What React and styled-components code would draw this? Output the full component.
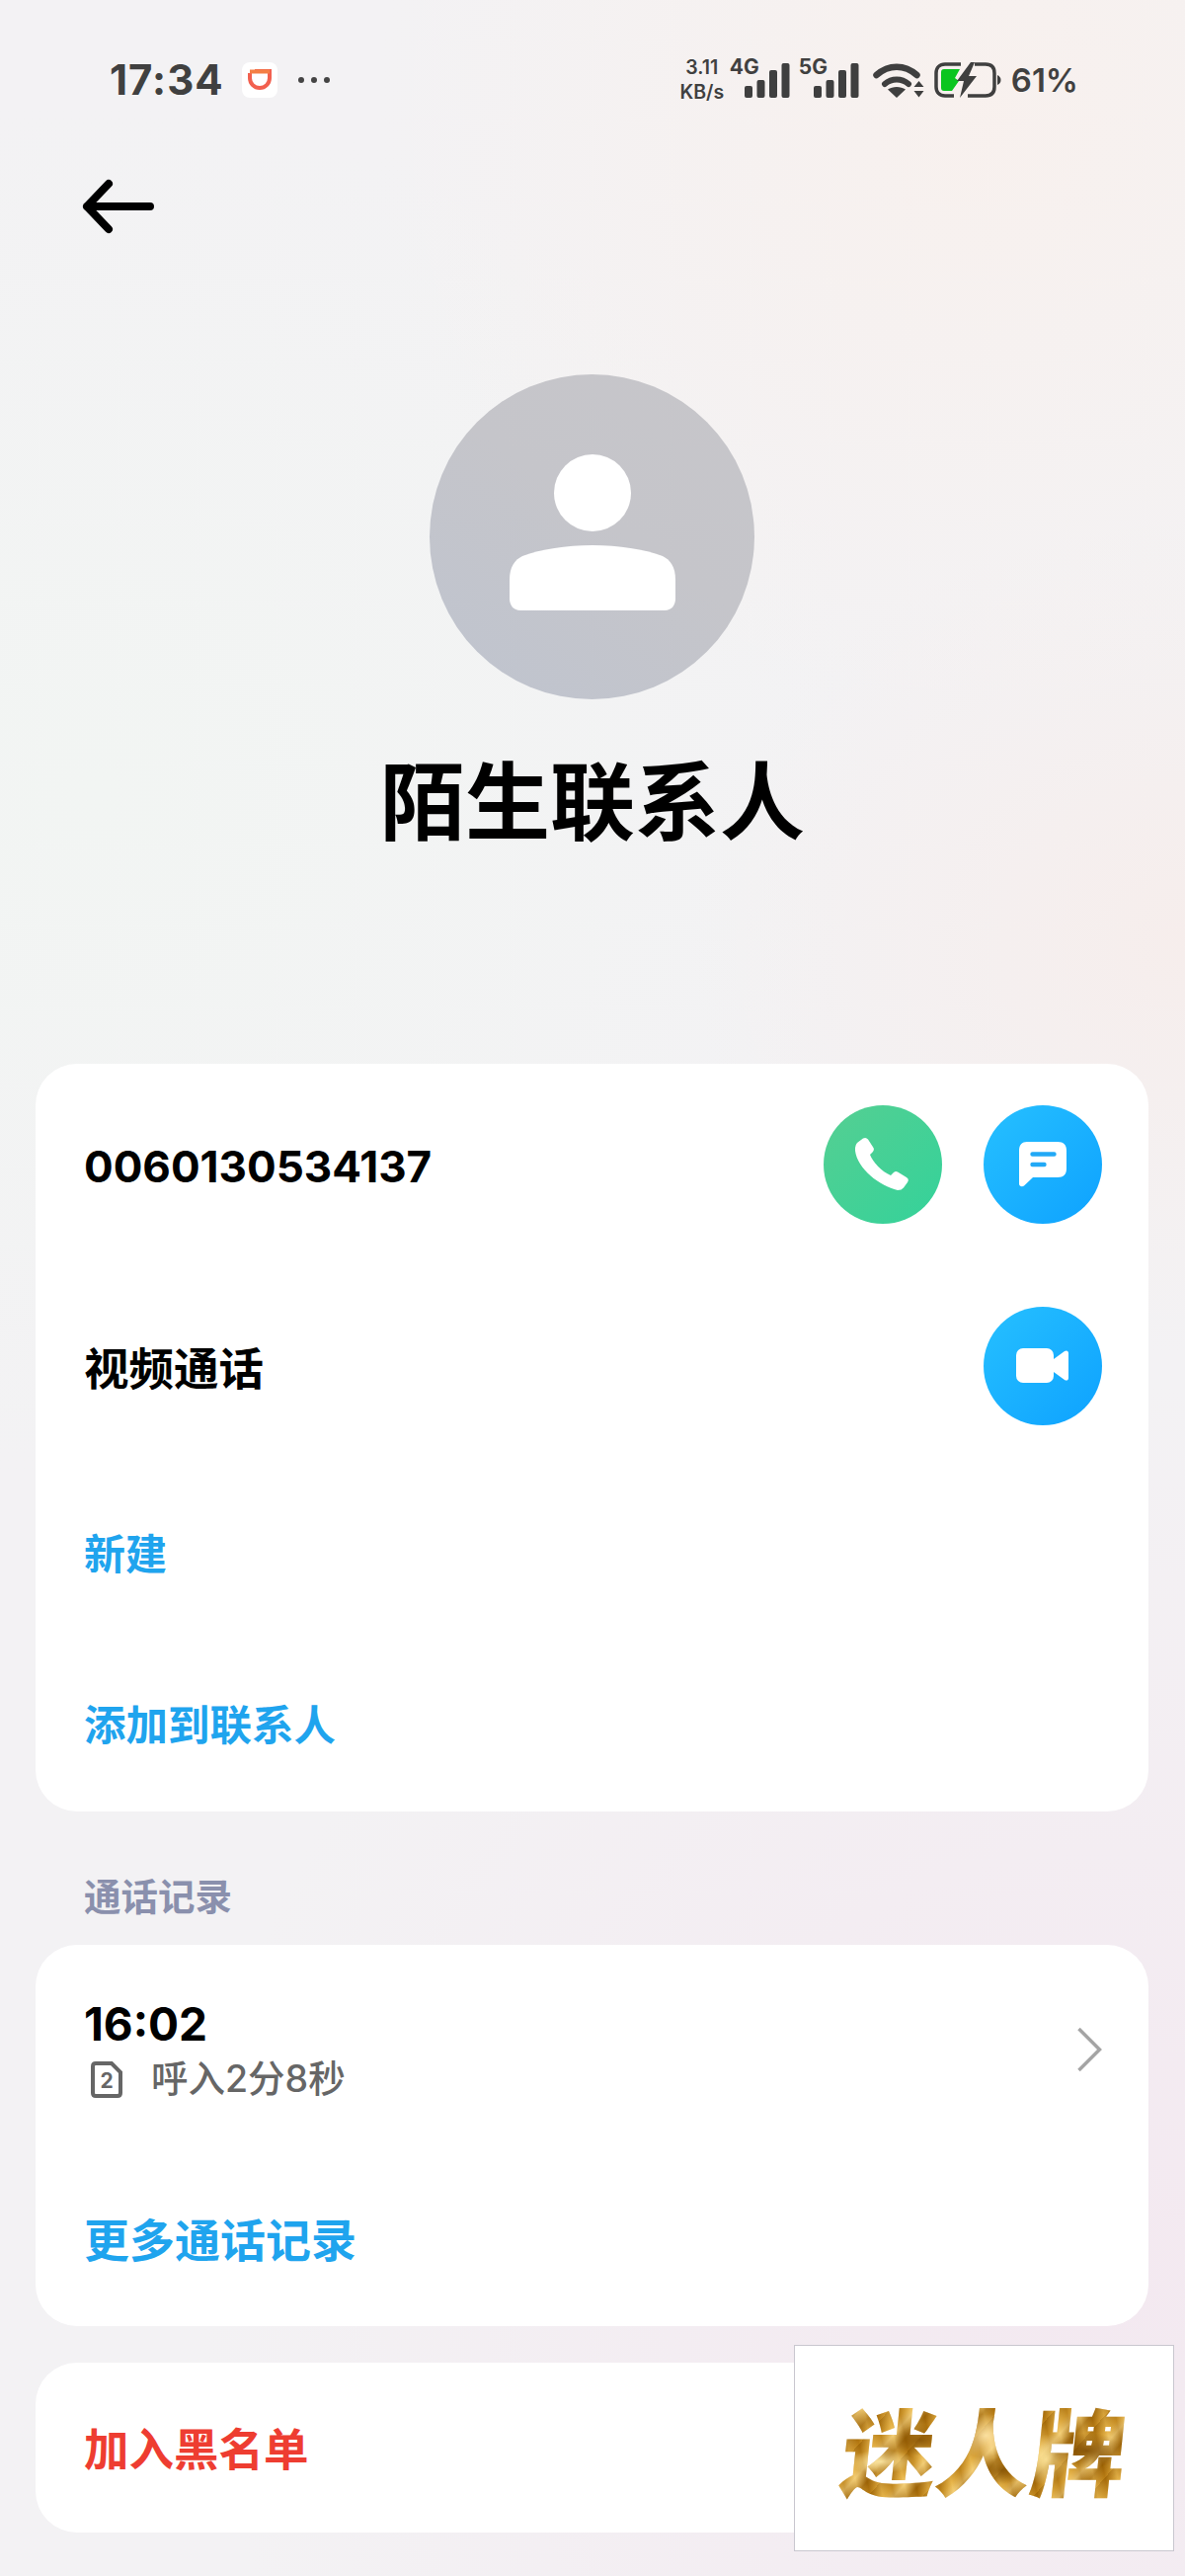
import React from 'react';
import styled, { createGlobalStyle } from 'styled-components';

const CJK = '"Inter", "Noto Sans CJK SC", "Noto Sans", sans-serif';

const GlobalStyle = createGlobalStyle`
  html, body {
    margin: 0;
    padding: 0;
    background: #f3f3f4;
  }
  * {
    box-sizing: border-box;
  }
`;

export default function App() {
  return (
    <Page>
      <GlobalStyle />
      <StatusBar>
        <StatusLeft>
          <Clock>17:34</Clock>
          <AppBadge>
            <svg width="26" height="24" viewBox="0 0 26 24" fill="none">
              <path d="M3 5V10A10 10 0 0 0 23 10V3H8" stroke="#f2604f" strokeWidth="4" />
              <path d="M3 3.500H23" stroke="#f47f45" strokeWidth="4" />
            </svg>
          </AppBadge>
          <Dots>
            <span /><span /><span />
          </Dots>
        </StatusLeft>
        <StatusRight>
          <Speed>
            <span>3.11</span>
            <span>KB/s</span>
          </Speed>
          <Signal>
            <NetLabel>4G</NetLabel>
            <SignalBars />
          </Signal>
          <Signal>
            <NetLabel>5G</NetLabel>
            <SignalBars />
          </Signal>
          <WifiWrap>
            <svg width="54" height="36" viewBox="0 0 54 36" fill="none">
              <path d="M4.500 13C17 2 33 2 45.500 13" stroke="#3f3f3f" strokeWidth="6.500" strokeLinecap="round" />
              <path d="M13 22C20 16 30 16 37 22" stroke="#3f3f3f" strokeWidth="6" strokeLinecap="round" />
              <path d="M16 27.500C21 24 29 24 34 27.500L25 36Z" fill="#3f3f3f" />
              <path d="M47.500 19L52.500 25H42.500Z M47.500 35.500L42.500 29H52.500Z" fill="#3f3f3f" />
            </svg>
          </WifiWrap>
          <svg width="68" height="36" viewBox="0 0 68 36" fill="none">
            <path d="M27 2H11C5.500 2 2 5.500 2 11V25C2 30.500 5.500 34 11 34H20" stroke="#3f3f3f" strokeWidth="3.500" />
            <path d="M41 2H52C58 2 61 5.500 61 11V25C61 30.500 58 34 52 34H34" stroke="#3f3f3f" strokeWidth="3.500" />
            <path d="M64 13C66.500 14 67.500 16 67.500 18C67.500 20 66.500 22 64 23Z" fill="#3f3f3f" />
            <path d="M10 7H26L21 16L25 19L18 29H10C8 29 7 28 7 26V10C7 8 8 7 10 7Z" fill="#0bc51f" />
            <path d="M37 0L23 19H30L26 36L43 14H35L41 0Z" fill="#3f3f3f" />
          </svg>
          <Percent>61%</Percent>
        </StatusRight>
      </StatusBar>

      <BackButton>
        <svg width="76" height="56" viewBox="0 0 76 56" fill="none">
          <path d="M28 5L6 28L28 51M6 28H70" stroke="#000" strokeWidth="8" strokeLinecap="round" strokeLinejoin="round" />
        </svg>
      </BackButton>

      <Profile>
        <Avatar>
          <svg width="170" height="158" viewBox="0 0 170 158" fill="#fff">
            <circle cx="85" cy="39" r="39" />
            <path d="M1 127C1 114 6 107 14 103C33 96 58 92 85 92C112 92 137 96 156 103C164 107 169 114 169 127V146C169 153 165 158 158 158H12C5 158 1 153 1 146Z" />
          </svg>
        </Avatar>
        <Name>陌生联系人</Name>
      </Profile>

      <Card>
        <ActionRow>
          <Number>0060130534137</Number>
          <Buttons>
            <RoundButton $kind="green">
              <svg width="56" height="56" viewBox="0 0 56 56" fill="#fff">
                <path d="M2 6L8 1.500Q11 0 13 2.500L18.500 11Q19.500 13 18 15L15 18C18 26 27 35 36 39L39 36Q41 34.500 43 35.500L52 41Q55 43 53 46L49 51.500Q47 54 43 54C25 50 2 32 0 14Q-0.500 9 2 6Z" />
              </svg>
            </RoundButton>
            <RoundButton $kind="blue">
              <svg width="48" height="46" viewBox="0 0 48 46">
                <path d="M8 0H39C45 0 48 3 48 9V27C48 33 45 36 39 36H14L5 44.500C3 46 0 45 0 42.500V9C0 3 3 0 8 0Z" fill="#fff" />
                <path d="M13.500 12.500H35.500M13.500 23H25.500" stroke="#22a9f6" strokeWidth="4.400" strokeLinecap="round" />
              </svg>
            </RoundButton>
          </Buttons>
        </ActionRow>
        <ActionRow $gap={84}>
          <RowTitle>视频通话</RowTitle>
          <Buttons>
            <RoundButton $kind="blue">
              <svg width="54" height="36" viewBox="0 0 54 36" fill="#fff">
                <rect x="0" y="0" width="38" height="35" rx="7" />
                <path d="M38 11L49 3C51 1.800 53 2.500 53 5V30C53 32.500 51 33.200 49 32L38 24Z" />
              </svg>
            </RoundButton>
          </Buttons>
        </ActionRow>
        <LinkRow $top={77} $height={100} $size={42}>新建</LinkRow>
        <LinkRow $top={73} $height={100} $size={42.500}>添加到联系人</LinkRow>
      </Card>

      <SectionLabel>通话记录</SectionLabel>

      <HistoryCard>
        <RecordRow>
          <RecordInfo>
            <RecordTime>16:02</RecordTime>
            <RecordMeta>
              <svg width="32" height="37" viewBox="0 0 32 37" fill="none">
                <path d="M5 2H21L30 11V32C30 34 29 35 27 35H5C3 35 2 34 2 32V5C2 3 3 2 5 2Z" stroke="#666" strokeWidth="4" />
                <text x="16" y="27" textAnchor="middle" fontSize="21" fontWeight="700" fontFamily="Inter, sans-serif" fill="#666">2</text>
              </svg>
              <span>呼入2分8秒</span>
            </RecordMeta>
          </RecordInfo>
          <svg width="26" height="46" viewBox="0 0 26 46" fill="none">
            <path d="M2.500 2L23.500 23L2.500 44" stroke="#a4a4a4" strokeWidth="3.500" />
          </svg>
        </RecordRow>
        <LinkRow $top={90} $height={100} $size={46}>更多通话记录</LinkRow>
      </HistoryCard>

      <BlockCard>加入黑名单</BlockCard>

      <Watermark>
        <GoldText>迷人牌</GoldText>
      </Watermark>
    </Page>
  );
}

function SignalBars() {
  return (
    <svg width="46" height="36" viewBox="0 0 46 36" fill="#3f3f3f">
      <rect x="0" y="24" width="8" height="12" rx="2" />
      <rect x="12.500" y="18" width="8" height="18" rx="2" />
      <rect x="25" y="8" width="8" height="28" rx="2" />
      <rect x="37.500" y="1" width="8" height="35" rx="2" />
    </svg>
  );
}

const Page = styled.div`
  position: relative;
  width: 1200px;
  height: 2608px;
  overflow: hidden;
  font-family: ${CJK};
  background:
    radial-gradient(620px 620px at 1000px 120px, rgba(250, 240, 235, 0.7), rgba(250, 240, 235, 0) 100%),
    radial-gradient(500px 420px at 1200px 950px, rgba(250, 232, 226, 0.45), rgba(250, 232, 226, 0) 100%),
    radial-gradient(900px 900px at 1100px 2300px, rgba(243, 232, 240, 0.95), rgba(243, 232, 240, 0) 100%),
    radial-gradient(800px 700px at 100px 800px, rgba(242, 245, 243, 1), rgba(242, 245, 243, 0) 100%),
    #f3f2f4;
`;

const StatusBar = styled.div`
  display: flex;
  justify-content: space-between;
  align-items: center;
  height: 36px;
  margin-top: 63px;
  padding: 0 108px 0 111px;
`;

const StatusLeft = styled.div`
  display: flex;
  align-items: center;
`;

const Clock = styled.div`
  font-size: 42px;
  font-weight: 700;
  letter-spacing: 1px;
  color: #404040;
  line-height: 36px;
`;

const AppBadge = styled.div`
  display: flex;
  align-items: center;
  justify-content: center;
  width: 36px;
  height: 36px;
  margin-left: 18px;
  border-radius: 8px;
  background: #fff;
`;

const Dots = styled.div`
  display: flex;
  gap: 7px;
  margin-left: 21px;

  span {
    width: 6px;
    height: 6px;
    border-radius: 50%;
    background: #444;
  }
`;

const StatusRight = styled.div`
  display: flex;
  align-items: center;
  gap: 9px;
`;

const Speed = styled.div`
  display: flex;
  flex-direction: column;
  align-items: center;
  width: 46px;
  margin-right: -4px;
  font-size: 19.500px;
  font-weight: 600;
  line-height: 25px;
  white-space: nowrap;
  color: #404040;
`;

const Signal = styled.div`
  position: relative;
  display: flex;
  justify-content: flex-end;
  width: 61px;
  height: 36px;
`;

const NetLabel = styled.span`
  position: absolute;
  left: 0;
  top: -6px;
  font-size: 21px;
  font-weight: 700;
  line-height: 22px;
  color: #404040;
`;

const WifiWrap = styled.div`
  display: flex;
  margin-left: 4px;
`;

const Percent = styled.div`
  margin-left: 1px;
  font-size: 33px;
  font-weight: 600;
  color: #404040;
  line-height: 36px;
`;

const BackButton = styled.div`
  display: flex;
  margin: 82px 0 0 82px;
  height: 56px;
`;

const Profile = styled.div`
  display: flex;
  flex-direction: column;
  align-items: center;
  margin-top: 142px;
`;

const Avatar = styled.div`
  display: flex;
  align-items: center;
  justify-content: center;
  width: 329px;
  height: 329px;
  margin-right: 1px;
  padding-bottom: 9px;
  border-radius: 50%;
  background: linear-gradient(35deg, #bfc4cf 0%, #c5c5ca 55%, #c7c6ca 100%);
`;

const Name = styled.h1`
  margin: 46px 0 0;
  font-size: 86px;
  font-weight: 700;
  line-height: 118px;
  color: #000;
`;

const Card = styled.section`
  display: flex;
  flex-direction: column;
  width: 1127px;
  height: 757px;
  margin: 205px 0 0 36px;
  padding: 42px 47px 0 49px;
  border-radius: 42px;
  background: #fff;
`;

const ActionRow = styled.div`
  display: flex;
  justify-content: space-between;
  align-items: center;
  height: 120px;
  margin-top: ${(p) => p.$gap || 0}px;
`;

const Number = styled.div`
  padding-top: 3px;
  font-size: 44px;
  font-weight: 700;
  color: #000;
`;

const RowTitle = styled.div`
  font-size: 45.500px;
  font-weight: 700;
  color: #000;
`;

const Buttons = styled.div`
  display: flex;
  gap: 42px;
`;

const RoundButton = styled.div`
  display: flex;
  align-items: center;
  justify-content: center;
  width: 120px;
  height: 120px;
  border-radius: 50%;
  background: ${(p) =>
    p.$kind === 'green'
      ? 'linear-gradient(135deg, #55cf92 0%, #34d29a 100%)'
      : 'linear-gradient(135deg, #26c0ff 0%, #0ea2ff 100%)'};
`;

const LinkRow = styled.div`
  display: flex;
  align-items: center;
  height: ${(p) => p.$height}px;
  margin-top: ${(p) => p.$top}px;
  font-size: ${(p) => p.$size}px;
  font-weight: 700;
  color: #1fa4ee;
`;

const SectionLabel = styled.div`
  height: 50px;
  margin: 62px 0 0 85px;
  font-size: 37.500px;
  font-weight: 600;
  line-height: 50px;
  color: #8a90ad;
`;

const HistoryCard = styled.section`
  display: flex;
  flex-direction: column;
  width: 1127px;
  height: 386px;
  margin: 23px 0 0 36px;
  padding: 56px 47px 0 49px;
  border-radius: 42px;
  background: #fff;
`;

const RecordRow = styled.div`
  display: flex;
  justify-content: space-between;
  align-items: center;
  height: 100px;
`;

const RecordInfo = styled.div`
  display: flex;
  flex-direction: column;
  gap: 5px;
  margin-top: -1px;
`;

const RecordTime = styled.div`
  font-size: 46px;
  font-weight: 700;
  line-height: 56px;
  color: #000;
`;

const RecordMeta = styled.div`
  display: flex;
  align-items: center;
  gap: 29px;
  padding-left: 7px;
  font-size: 37.500px;
  font-weight: 500;
  line-height: 46px;
  color: #666;
`;

const BlockCard = styled.section`
  display: flex;
  align-items: center;
  width: 1127px;
  height: 172px;
  margin: 37px 0 0 36px;
  padding: 0 0 2px 49px;
  border-radius: 42px;
  background: #fff;
  font-size: 45.500px;
  font-weight: 700;
  color: #ee3d31;
`;

const Watermark = styled.div`
  position: absolute;
  left: 804px;
  top: 2374px;
  display: flex;
  align-items: center;
  justify-content: center;
  width: 385px;
  height: 209px;
  border: 1px solid #c9c7cf;
  background: #fff;
`;

const GoldText = styled.div`
  font-family: "Noto Sans CJK SC", sans-serif;
  font-size: 96px;
  font-weight: 900;
  line-height: 110px;
  transform: skewX(-6deg);
  color: transparent;
  background:
    radial-gradient(34px 12px at 14% 62%, rgba(255, 236, 170, 0.9), rgba(255, 236, 170, 0)),
    radial-gradient(26px 16px at 27% 42%, rgba(130, 78, 0, 0.85), rgba(130, 78, 0, 0)),
    radial-gradient(30px 22px at 50% 38%, rgba(255, 230, 170, 0.9), rgba(255, 230, 170, 0)),
    radial-gradient(24px 14px at 57% 70%, rgba(125, 75, 0, 0.75), rgba(125, 75, 0, 0)),
    radial-gradient(36px 18px at 86% 52%, rgba(120, 70, 0, 0.85), rgba(120, 70, 0, 0)),
    radial-gradient(22px 26px at 72% 60%, rgba(250, 225, 150, 0.95), rgba(250, 225, 150, 0)),
    repeating-linear-gradient(72deg, rgba(255, 215, 120, 0.35) 0px, rgba(150, 90, 0, 0.35) 11px, rgba(255, 215, 120, 0.35) 23px),
    repeating-linear-gradient(128deg, #a86f0c 0px, #dca535 13px, #eecb78 21px, #9d6508 33px, #c98d1e 44px);
  -webkit-background-clip: text;
  background-clip: text;
`;
